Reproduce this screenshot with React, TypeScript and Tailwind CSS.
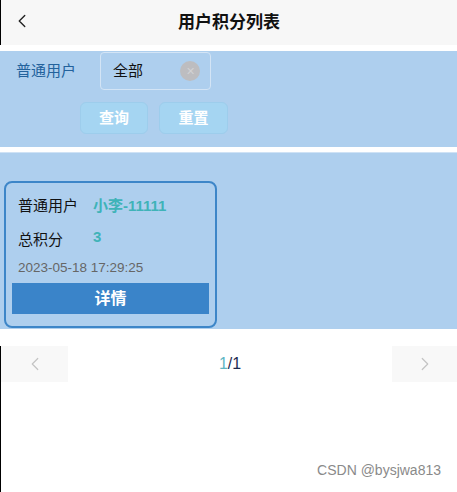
import { ChevronLeft, ChevronRight } from "lucide-react";

const cjk = "font-['Liberation_Sans','Noto_Sans_CJK_SC',sans-serif]";

function Header() {
  return (
    <header className="relative flex h-[45px] items-center justify-center border-l border-black bg-[#f7f7f7]">
      <button type="button" className="absolute left-[10px] top-[10px] text-[#222]">
        <ChevronLeft className="h-[22px] w-[22px]" strokeWidth={1.5} />
      </button>
      <h1 className="text-[17px] font-bold text-[#111]">用户积分列表</h1>
    </header>
  );
}

function Filter() {
  return (
    <section className="mt-[6px] h-[96px] bg-[#aecfee] pl-[16px] pt-[1px]">
      <div className="flex items-center">
        <span className="w-[84px] text-[15px] text-[#23629c]">普通用户</span>
        <div className="flex h-[38px] w-[111px] items-center justify-between rounded-[4px] border border-[#d3e4f5] pl-[12px] pr-[10px]">
          <span className="text-[15px] text-[#111]">全部</span>
          <span className="flex h-[20px] w-[20px] items-center justify-center rounded-full bg-[#bdbdc0] text-[11px] leading-none text-[#d2d2d4]">
            ✕
          </span>
        </div>
      </div>
      <div className="ml-[64px] mt-[12px] flex gap-[11px]">
        <button
          type="button"
          className="h-[32px] w-[68px] rounded-[6px] border border-[#9dcdec] bg-[#a5d5f2] text-[15px] font-bold text-white"
        >
          查询
        </button>
        <button
          type="button"
          className="h-[32px] w-[69px] rounded-[6px] border border-[#9dcdec] bg-[#a5d5f2] text-[15px] font-bold text-white"
        >
          重置
        </button>
      </div>
    </section>
  );
}

function Card() {
  return (
    <div className="ml-[4px] w-[213px] rounded-[8px] border-2 border-[#3d86c8] px-[6px] pb-[12px] pt-[12px]">
      <div className="flex items-center pl-[6px]">
        <span className="w-[75px] text-[15px] text-[#111]">普通用户</span>
        <span className="text-[15px] font-bold text-[#3fb3b8]">小李-11111</span>
      </div>
      <div className="mt-[8px] flex items-start pl-[6px]">
        <span className="mt-[3px] w-[75px] text-[15px] text-[#111]">总积分</span>
        <span className="text-[15px] font-bold text-[#3fb3b8]">3</span>
      </div>
      <div className="mt-[7px] pl-[6px] text-[13.5px] text-[#666]">2023-05-18 17:29:25</div>
      <button
        type="button"
        className="mt-[5px] h-[31px] w-full bg-[#3a84c9] text-[16px] font-bold text-white"
      >
        详情
      </button>
    </div>
  );
}

function Pager() {
  return (
    <div className="mt-[17px] flex h-[36px] items-center justify-between border-l border-black">
      <button type="button" className="flex h-full w-[67px] items-center justify-center bg-[#f8f8f8] text-[#c4c4c4]">
        <ChevronLeft className="h-[22px] w-[22px]" strokeWidth={1.3} />
      </button>
      <span className="text-[16px] text-[#1d2b4f]">
        <span className="text-[#5eb6c4]">1</span>/1
      </span>
      <button type="button" className="flex h-full w-[65px] items-center justify-center bg-[#f8f8f8] text-[#c4c4c4]">
        <ChevronRight className="h-[22px] w-[22px]" strokeWidth={1.3} />
      </button>
    </div>
  );
}

export default function App() {
  return (
    <div className={`h-[492px] w-[457px] overflow-hidden bg-white ${cjk}`}>
      <Header />
      <Filter />
      <div className="mt-[5px] border-t border-[#cfe2f5] bg-[#aecfee] pb-[1px] pt-[28px]">
        <Card />
      </div>
      <Pager />
      <div className="flex h-[110px] items-end justify-end border-l border-black pb-[11px] pr-[16px]">
        <span className="text-[14px] text-[#8a8a8a]">CSDN @bysjwa813</span>
      </div>
    </div>
  );
}
